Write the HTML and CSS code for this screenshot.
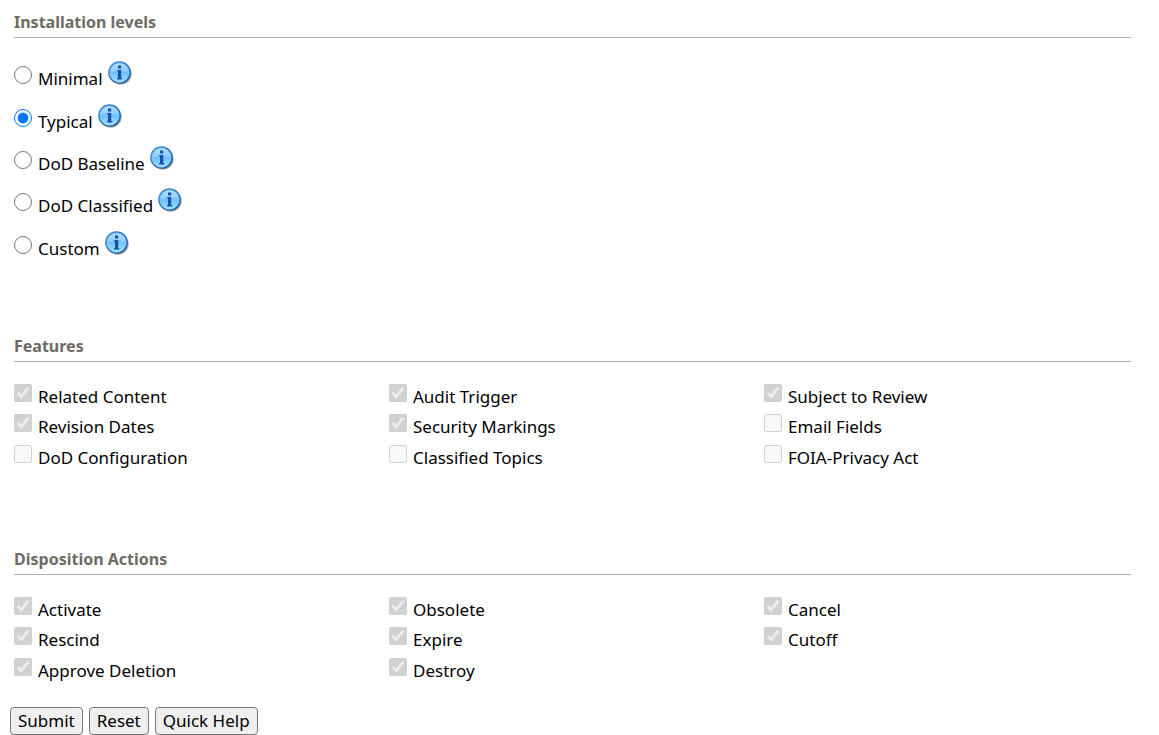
FILE: index.html
```
<!DOCTYPE html>
<html lang="en">
<head>
<meta charset="utf-8">
<title>Installation levels</title>
<link rel="stylesheet" href="styles.css">
</head>
<body>
<svg class="defs" aria-hidden="true">
  <defs>
    <linearGradient id="ball" x1="0" y1="0" x2="0" y2="1">
      <stop offset="0" stop-color="#6db9f8"/>
      <stop offset="0.5" stop-color="#6fc0fd"/>
      <stop offset="1" stop-color="#a4e6ff"/>
    </linearGradient>
    <linearGradient id="rim" x1="0" y1="0" x2="1" y2="1">
      <stop offset="0" stop-color="#4a92dc"/>
      <stop offset="1" stop-color="#1c55a8"/>
    </linearGradient>
    <linearGradient id="shine" x1="0" y1="0" x2="0" y2="1">
      <stop offset="0" stop-color="#d6efff"/>
      <stop offset="1" stop-color="#8fcffd"/>
    </linearGradient>
    <radialGradient id="shade">
      <stop offset="0.8" stop-color="#444" stop-opacity="0.8"/>
      <stop offset="1" stop-color="#444" stop-opacity="0"/>
    </radialGradient>
    <symbol id="info" viewBox="0 0 24 24">
      <circle cx="12.9" cy="13" r="11.4" fill="url(#shade)"/>
      <circle cx="11.5" cy="11.5" r="10.7" fill="url(#ball)" stroke="url(#rim)" stroke-width="1.3"/>
      <path d="M2.2 11.5a9.3 9.3 0 0 1 18.6 0q-9.3-3-18.6 0z" fill="url(#shine)" opacity="0.7"/>
      <path d="M10 4.6h3.2v2.9H10zM9.2 9h4v8h1v1.5H9V17h1v-6.5h-.8z" fill="#1a52a8"/>
    </symbol>
  </defs>
</svg>
<form class="setup">
  <section class="group group-levels">
    <h2 class="heading">Installation levels</h2>
    <div class="levels">
      <div class="level"><label class="option"><input type="radio" name="level"><span>Minimal</span></label><svg class="info" role="img" aria-label="Info"><use href="#info"/></svg></div>
      <div class="level"><label class="option"><input type="radio" name="level" checked><span>Typical</span></label><svg class="info" role="img" aria-label="Info"><use href="#info"/></svg></div>
      <div class="level"><label class="option"><input type="radio" name="level"><span>DoD Baseline</span></label><svg class="info" role="img" aria-label="Info"><use href="#info"/></svg></div>
      <div class="level"><label class="option"><input type="radio" name="level"><span>DoD Classified</span></label><svg class="info" role="img" aria-label="Info"><use href="#info"/></svg></div>
      <div class="level"><label class="option"><input type="radio" name="level"><span>Custom</span></label><svg class="info" role="img" aria-label="Info"><use href="#info"/></svg></div>
    </div>
  </section>
  <section class="group group-features">
    <h2 class="heading">Features</h2>
    <div class="checks">
      <label class="option"><input type="checkbox" disabled checked><span>Related Content</span></label>
      <label class="option"><input type="checkbox" disabled checked><span>Audit Trigger</span></label>
      <label class="option"><input type="checkbox" disabled checked><span>Subject to Review</span></label>
      <label class="option"><input type="checkbox" disabled checked><span>Revision Dates</span></label>
      <label class="option"><input type="checkbox" disabled checked><span>Security Markings</span></label>
      <label class="option"><input type="checkbox" disabled><span>Email Fields</span></label>
      <label class="option"><input type="checkbox" disabled><span>DoD Configuration</span></label>
      <label class="option"><input type="checkbox" disabled><span>Classified Topics</span></label>
      <label class="option"><input type="checkbox" disabled><span>FOIA-Privacy Act</span></label>
    </div>
  </section>
  <section class="group">
    <h2 class="heading">Disposition Actions</h2>
    <div class="checks">
      <label class="option"><input type="checkbox" disabled checked><span>Activate</span></label>
      <label class="option"><input type="checkbox" disabled checked><span>Obsolete</span></label>
      <label class="option"><input type="checkbox" disabled checked><span>Cancel</span></label>
      <label class="option"><input type="checkbox" disabled checked><span>Rescind</span></label>
      <label class="option"><input type="checkbox" disabled checked><span>Expire</span></label>
      <label class="option"><input type="checkbox" disabled checked><span>Cutoff</span></label>
      <label class="option"><input type="checkbox" disabled checked><span>Approve Deletion</span></label>
      <label class="option"><input type="checkbox" disabled checked><span>Destroy</span></label>
    </div>
  </section>
  <div class="buttons">
    <button type="button">Submit</button>
    <button type="button">Reset</button>
    <button type="button">Quick Help</button>
  </div>
</form>
</body>
</html>
```
FILE: styles.css
```
* {
  box-sizing: border-box;
}

body {
  margin: 0;
  background: #fff;
  color: #000;
  font: 17px/22px Tahoma, "Noto Sans", sans-serif;
}

.defs {
  position: absolute;
  width: 0;
  height: 0;
}

.setup {
  padding: 11px 28px 0 10px;
}

.group {
  padding-left: 4px;
}

.group-levels {
  margin-bottom: 69px;
}

.group-features {
  margin-bottom: 79px;
}

.heading {
  margin: 0 0 16px;
  padding-bottom: 3px;
  border-bottom: 1px solid #b1b1a9;
  color: #6c6c64;
  font-size: 16px;
  line-height: 23px;
}

.levels {
  display: grid;
  grid-auto-rows: 1fr;
  min-height: 212px;
}

.level {
  display: flex;
  align-items: center;
  gap: 5px;
}

.option {
  display: flex;
  align-items: center;
  gap: 6px;
}

.option input {
  width: 18px;
  height: 18px;
  margin: 0;
}

.option span {
  padding-top: 8px;
}

.info {
  width: 24px;
  height: 24px;
  margin-bottom: 4px;
}

.checks {
  display: grid;
  grid-template-columns: repeat(3, 1fr);
  grid-auto-rows: 1fr;
  column-gap: 8px;
  min-height: 91px;
}

.buttons {
  display: flex;
  gap: 6px;
  margin-top: 25px;
}

button {
  height: 28px;
  padding: 0 7px;
  border: 1px solid #767676;
  border-radius: 4px;
  background: #efefef;
  color: #000;
  font: inherit;
}
```
